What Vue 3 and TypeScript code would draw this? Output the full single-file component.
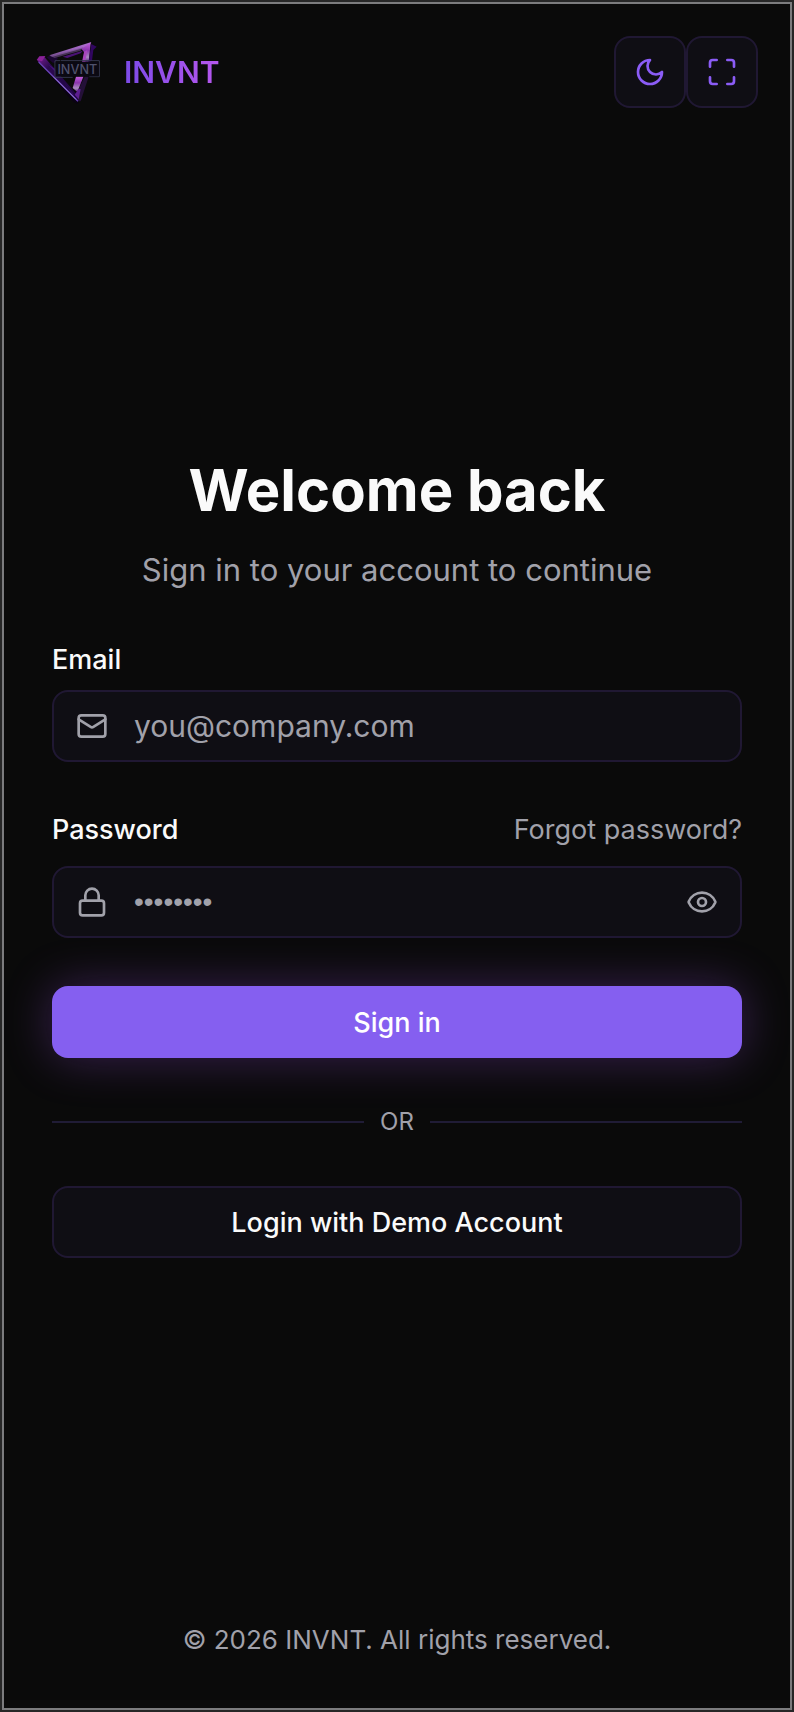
<script setup lang="ts">
import { ref } from 'vue'

const email = ref('')
const password = ref('')
const showPassword = ref(false)
</script>

<template>
  <div class="frame">
    <div class="page">
      <header class="header">
        <a class="brand" href="#">
          <svg class="logo" viewBox="18 12 192 192" aria-hidden="true">
            <defs>
              <linearGradient id="top-face" x1="0" y1="0" x2="1" y2="0">
                <stop offset="0" stop-color="#7d5296" />
                <stop offset="0.55" stop-color="#9b64bb" />
                <stop offset="1" stop-color="#b06ed2" />
              </linearGradient>
              <linearGradient id="right-face" x1="0" y1="0" x2="0" y2="1">
                <stop offset="0" stop-color="#c45fe0" />
                <stop offset="0.4" stop-color="#8a35ad" />
                <stop offset="0.75" stop-color="#a98bc0" />
                <stop offset="1" stop-color="#5a2180" />
              </linearGradient>
              <linearGradient id="left-face" x1="0" y1="0" x2="1" y2="1">
                <stop offset="0" stop-color="#7a2095" />
                <stop offset="0.25" stop-color="#2c0a50" />
                <stop offset="1" stop-color="#1c0440" />
              </linearGradient>
            </defs>
            <path d="M22 76 40 70 148 182 144 204 130 198Z" fill="#0a0212" />
            <path d="M22 74 30 62 44 64 56 78 148 184 150 196 140 196Z" fill="url(#left-face)" />
            <path d="M50 64 62 58 84 66 76 80 68 80Z" fill="#1a0630" />
            <path d="M54 84 74 98 74 106Z M100 136 128 172 134 182Z" fill="#43107a" />
            <path d="M26 78 144 196" stroke="#6a45b8" stroke-width="4" />
            <path d="M70 122 138 190" stroke="#a58be0" stroke-width="2" />
            <path d="M58 58 184 18 176 32 68 62Z" fill="url(#top-face)" />
            <path d="M60 60 160 34 152 44 74 66Z" fill="#6d4a85" opacity="0.6" />
            <path d="M98 62 158 44 152 52 112 66Z" fill="#4a1274" />
            <path d="M182 20 176 78 164 78 162 48 154 38Z" fill="url(#right-face)" />
            <path d="M138 122 160 122 142 168 128 156Z" fill="url(#right-face)" />
            <path d="M164 122 176 122 152 196 142 192 146 160Z" fill="#241038" />
            <path d="M146 158 152 160 146 190 134 176Z" fill="#5c1d91" />
            <path d="M184 24 200 32 190 42 186 74 176 78Z" fill="#31065f" />
            <path d="M162 48 172 42 166 78 156 78Z" fill="#a945bd" />
            <path d="M20 72 28 61 46 60 36 76Z" fill="#8b2299" />
            <path d="M90 74H75V124H128 M92 74H208V122H178" fill="none" stroke="#363850" stroke-width="3" />
            <rect x="77" y="77" width="129" height="44" fill="#0b0913" />
            <text x="142" y="113" text-anchor="middle" class="logo-text">INVNT</text>
          </svg>
          <span class="brand-name">INVNT</span>
        </a>
        <div class="tools">
          <button class="tool" type="button" aria-label="Toggle theme">
            <svg class="icon" viewBox="0 0 24 24" aria-hidden="true">
              <path d="M12 3a6 6 0 0 0 9 9 9 9 0 1 1-9-9Z" />
            </svg>
          </button>
          <button class="tool" type="button" aria-label="Toggle fullscreen">
            <svg class="icon" viewBox="0 0 24 24" aria-hidden="true">
              <path d="M8 3H5a2 2 0 0 0-2 2v3M21 8V5a2 2 0 0 0-2-2h-3M3 16v3a2 2 0 0 0 2 2h3M16 21h3a2 2 0 0 0 2-2v-3" />
            </svg>
          </button>
        </div>
      </header>

      <main class="main">
        <div class="intro">
          <h1 class="title">Welcome back</h1>
          <p class="subtitle">Sign in to your account to continue</p>
        </div>

        <form class="form" @submit.prevent>
          <div class="field">
            <label class="label" for="email">Email</label>
            <div class="control">
              <svg class="icon" viewBox="0 0 24 24" aria-hidden="true">
                <rect width="20" height="16" x="2" y="4" rx="2" />
                <path d="m22 7-8.97 5.7a1.94 1.94 0 0 1-2.06 0L2 7" />
              </svg>
              <input id="email" v-model="email" class="input" type="email" placeholder="you@company.com" />
            </div>
          </div>

          <div class="field">
            <div class="label-row">
              <label class="label" for="password">Password</label>
              <a class="forgot" href="#">Forgot password?</a>
            </div>
            <div class="control">
              <svg class="icon" viewBox="0 0 24 24" aria-hidden="true">
                <rect width="18" height="11" x="3" y="11" rx="2" />
                <path d="M7 11V7a5 5 0 0 1 10 0v4" />
              </svg>
              <input
                id="password"
                v-model="password"
                class="input secret"
                :type="showPassword ? 'text' : 'password'"
                placeholder="••••••••"
              />
              <button class="reveal" type="button" aria-label="Show password" @click="showPassword = !showPassword">
                <svg class="icon" viewBox="0 0 24 24" aria-hidden="true">
                  <path d="M2.062 12.348a1 1 0 0 1 0-.696 10.75 10.75 0 0 1 19.876 0 1 1 0 0 1 0 .696 10.75 10.75 0 0 1-19.876 0" />
                  <circle cx="12" cy="12" r="3" />
                </svg>
              </button>
            </div>
          </div>

          <button class="button primary" type="submit">Sign in</button>
          <div class="divider"><span>OR</span></div>
          <button class="button secondary" type="button">Login with Demo Account</button>
        </form>
      </main>

      <footer class="footer">© 2026 INVNT. All rights reserved.</footer>
    </div>
  </div>
</template>

<style>
body {
  margin: 0;
  background: #27272a;
}
</style>

<style scoped>
.frame,
.frame * {
  box-sizing: border-box;
}

.frame {
  display: flex;
  min-height: 100vh;
  padding: 2px;
  background: #272727;
  color: #fafafa;
  font-family: Inter, "Liberation Sans", sans-serif;
  font-size: 27px;
  line-height: 40px;
}

.page {
  display: flex;
  flex: 1;
  flex-direction: column;
  min-width: 0;
  border: 2px solid #7c7c7e;
  background: #0a0a0a;
}

.header {
  display: flex;
  align-items: center;
  justify-content: space-between;
  padding: 32px;
}

.brand {
  display: flex;
  align-items: center;
  gap: 24px;
  text-decoration: none;
}

.logo {
  width: 64px;
  height: 64px;
}

.logo-text {
  fill: #50526c;
  font-size: 38px;
  font-weight: 500;
}

.brand-name {
  background: linear-gradient(90deg, #7c4be8, #b757ee);
  background-clip: text;
  color: transparent;
  font-size: 30px;
  font-weight: 600;
}

.tools {
  display: flex;
}

.tool {
  display: grid;
  place-items: center;
  width: 72px;
  height: 72px;
  padding: 0;
  border: 2px solid #201833;
  border-radius: 16px;
  background: #0f0e14;
  color: #8b5cf6;
}

.icon {
  flex: none;
  display: block;
  width: 32px;
  height: 32px;
  fill: none;
  stroke: currentColor;
  stroke-width: 2;
  stroke-linecap: round;
  stroke-linejoin: round;
}

.main {
  display: flex;
  flex: 1;
  flex-direction: column;
  justify-content: center;
  gap: 48px;
  padding: 0 48px;
}

.intro {
  display: flex;
  flex-direction: column;
  gap: 16px;
  text-align: center;
}

.title {
  margin: 0;
  font-size: 58px;
  font-weight: 700;
  line-height: 72px;
}

.subtitle {
  margin: 0;
  color: #a1a1aa;
  font-size: 31px;
  line-height: 56px;
}

.form {
  display: flex;
  flex-direction: column;
  gap: 48px;
}

.field {
  display: flex;
  flex-direction: column;
  gap: 16px;
}

.label {
  font-weight: 500;
  line-height: 28px;
}

.label-row {
  display: flex;
  align-items: center;
  justify-content: space-between;
}

.forgot {
  color: #a1a1aa;
  text-decoration: none;
}

.control {
  display: flex;
  align-items: center;
  gap: 26px;
  height: 72px;
  padding: 0 22px;
  border: 2px solid #201833;
  border-radius: 16px;
  background: #0f0e14;
  color: #a1a1aa;
}

.input {
  flex: 1;
  min-width: 0;
  height: 100%;
  padding: 0;
  border: 0;
  outline: 0;
  background: transparent;
  color: #fafafa;
  font-family: inherit;
  font-size: 30px;
}

.input::placeholder {
  color: #a1a1aa;
  opacity: 1;
}

.secret {
  font-family: "Liberation Sans", sans-serif;
  font-size: 28px;
}

.reveal {
  padding: 0;
  border: 0;
  background: transparent;
  color: inherit;
}

.button {
  height: 72px;
  border-radius: 16px;
  font-family: inherit;
  font-size: 27px;
  font-weight: 500;
}

.primary {
  border: 0;
  background: #855ff0;
  box-shadow: 0 0 48px rgba(168, 85, 247, 0.3);
  color: #ffffff;
}

.secondary {
  border: 2px solid #201833;
  background: #0f0e14;
  color: #fafafa;
}

.divider {
  display: flex;
  align-items: center;
  gap: 16px;
  color: #a1a1aa;
  font-size: 24px;
  line-height: 32px;
}

.divider::before,
.divider::after {
  flex: 1;
  height: 2px;
  background: #201c36;
  content: "";
}

.footer {
  padding: 48px;
  color: #a1a1aa;
  font-size: 26px;
  text-align: center;
}
</style>
